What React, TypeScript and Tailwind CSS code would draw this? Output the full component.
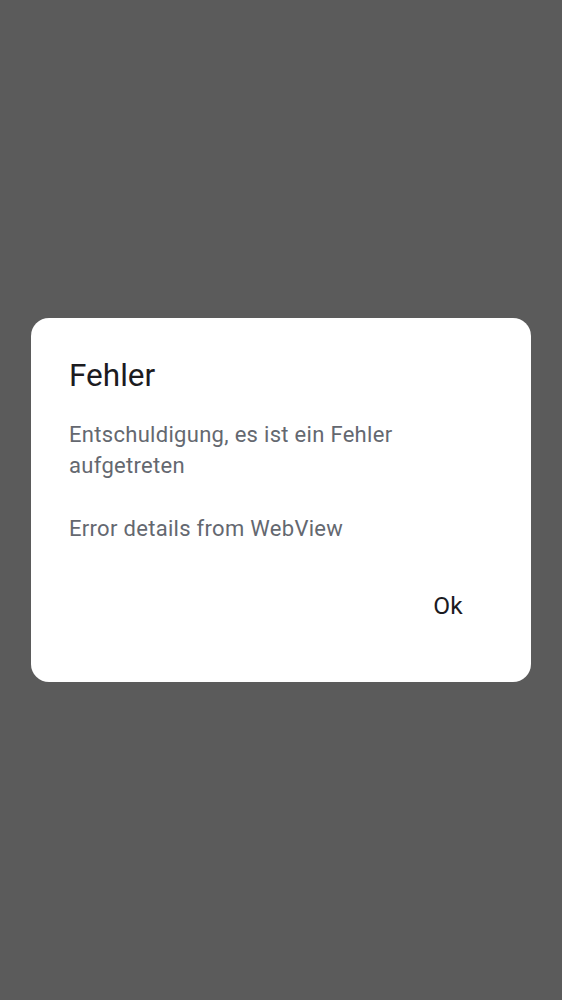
export default function App() {
  return (
    <div
      className="flex h-[1000px] w-full items-center justify-center bg-[#5b5b5b]"
      style={{ fontFamily: 'Roboto, "Noto Sans", sans-serif' }}
    >
      <div className="flex h-[364px] w-[500px] flex-col rounded-[18px] bg-white px-[38px] pt-[38px]">
        <h1 className="text-[31.5px] leading-[40px] text-[#1c1b1f]">Fehler</h1>
        <div className="mt-[23px] text-[22px] leading-[31px] tracking-[0.3px] text-[#646870]">
          <p>Entschuldigung, es ist ein Fehler aufgetreten</p>
          <p className="mt-[32px]">Error details from WebView</p>
        </div>
        <div className="mt-[47px] flex justify-end">
          <button className="pr-[30px] text-[24.5px] leading-[30px] tracking-[0.3px] text-[#1c1b1f]">Ok</button>
        </div>
      </div>
    </div>
  );
}
